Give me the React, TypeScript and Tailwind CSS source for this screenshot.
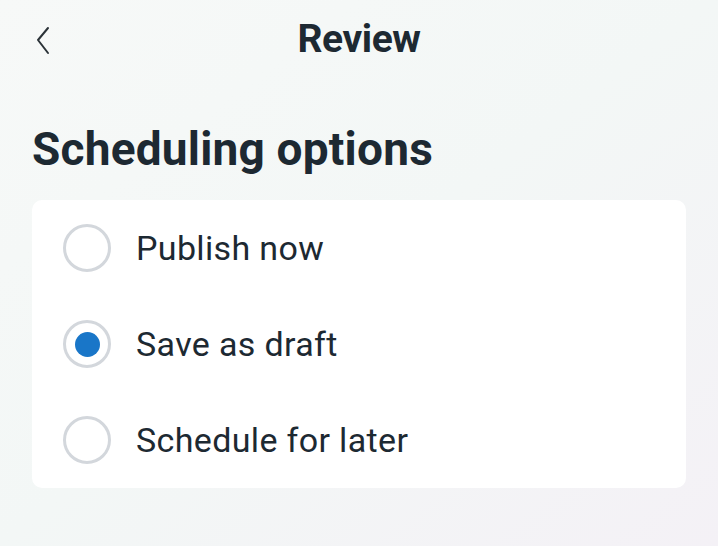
import { useState } from "react";

const OPTIONS = ["Publish now", "Save as draft", "Schedule for later"];

export default function App() {
  const [selected, setSelected] = useState("Save as draft");

  return (
    <div
      className="h-[546px] w-[718px] overflow-hidden bg-gradient-to-br from-[#f7f9f8] via-[#f3f7f6] to-[#f4f1f6] text-[#1d2932]"
      style={{ fontFamily: "Roboto, 'Noto Sans', sans-serif" }}
    >
      <header className="relative flex h-[78px] items-center justify-center">
        <button className="absolute left-[32px] top-[22px] p-1" aria-label="Back">
          <svg width="14" height="30" viewBox="0 0 14 30" fill="none">
            <path d="M12 2 L2 14 L12 27" stroke="#2b3338" strokeWidth="2" strokeLinecap="round" strokeLinejoin="round" />
          </svg>
        </button>
        <h1 className="text-[39px] font-bold tracking-[-0.4px]">Review</h1>
      </header>

      <h2 className="mt-[43px] px-[32px] text-[46px] font-bold leading-[56px] tracking-[0.2px]">
        Scheduling options
      </h2>

      <div className="mx-8 mt-[23px] rounded-[10px] bg-white">
        {OPTIONS.map((opt) => (
          <button
            key={opt}
            type="button"
            onClick={() => setSelected(opt)}
            className="flex h-24 w-full items-center gap-[25px] px-[31px] text-left"
          >
            <span className="flex h-12 w-12 items-center justify-center rounded-full border-[3.5px] border-[#d3d7dc]">
              {selected === opt && <span className="h-[25px] w-[25px] rounded-full bg-[#1976c8]" />}
            </span>
            <span className="text-[34px] leading-none tracking-[0.35px]">{opt}</span>
          </button>
        ))}
      </div>
    </div>
  );
}
